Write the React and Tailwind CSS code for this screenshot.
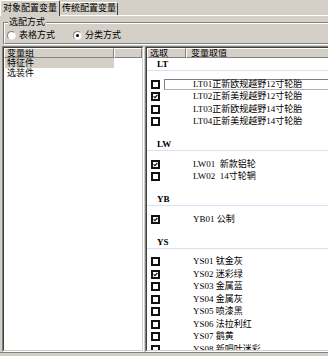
import React from 'react';

// Option groups shown on the right-hand list
const GROUPS = [
  {
    code: 'LT',
    items: [
      { text: 'LT01正新欧规越野12寸轮胎', checked: false, focus: true },
      { text: 'LT02正新美规越野12寸轮胎', checked: true },
      { text: 'LT03正新欧规越野14寸轮胎', checked: false },
      { text: 'LT04正新美规越野14寸轮胎', checked: false },
    ],
  },
  {
    code: 'LW',
    items: [
      { text: 'LW01  新款铝轮', checked: true },
      { text: 'LW02  14寸轮辋', checked: false },
    ],
  },
  {
    code: 'YB',
    items: [{ text: 'YB01 公制', checked: true }],
  },
  {
    code: 'YS',
    items: [
      { text: 'YS01 钛金灰', checked: false },
      { text: 'YS02 迷彩绿', checked: true },
      { text: 'YS03 金属蓝', checked: false },
      { text: 'YS04 金属灰', checked: false },
      { text: 'YS05 喷漆黑', checked: false },
      { text: 'YS06 法拉利红', checked: false },
      { text: 'YS07 鹅黄', checked: false },
      { text: 'YS08 新吧叶迷彩', checked: false },
    ],
  },
];

function CheckBox({ checked }) {
  return (
    <svg width="9" height="9" viewBox="0 0 9 9" className="shrink-0">
      <rect x="1" y="1" width="7" height="7" fill="white" stroke="#111" strokeWidth="2" />
      {checked && <path d="M2.6 4.4 L3.9 5.7 L6.4 3" stroke="#111" strokeWidth="1.2" fill="none" />}
    </svg>
  );
}

function Radio({ on }) {
  return (
    <div className="w-[9px] h-[9px] shrink-0 rounded-full bg-white border border-[#808080] border-b-[#e8e8e8] border-r-[#e8e8e8] flex items-center justify-center">
      {on && <div className="w-[3px] h-[3px] rounded-full bg-black" />}
    </div>
  );
}

// Sunken 2px frame, classic style
function Sunken({ className, children }) {
  return (
    <div className={`border-t border-l border-[#808080] border-b border-r border-b-white border-r-white ${className}`}>
      <div className="h-full border-t border-l border-[#404040] border-b border-r border-b-[#d4d0c8] border-r-[#d4d0c8] bg-white overflow-hidden">
        {children}
      </div>
    </div>
  );
}

const headCell = 'h-[10px] bg-[#d4d0c8] border-t border-l border-white border-b border-r border-b-[#808080] border-r-[#808080] leading-[8px] overflow-hidden whitespace-nowrap';

export default function App() {
  return (
    <div
      className="w-[328px] h-[356px] overflow-hidden bg-[#d4d0c8] text-[9px] text-black flex flex-col"
      style={{ fontFamily: '"Liberation Serif", "Noto Sans CJK SC", serif' }}
    >
      {/* Tabs */}
      <div className="h-[16px] shrink-0 flex items-end border-b border-white">
        <div className="h-[16px] -mb-px w-[60px] bg-[#d4d0c8] border-t border-l border-white border-r border-r-[#404040] rounded-t-[2px] pl-[2px] pt-[1px] leading-[12px] whitespace-nowrap">
          对象配置变量
        </div>
        <div className="h-[13px] w-[58px] border-t border-white border-r border-r-[#404040] rounded-t-[2px] pl-[2px] leading-[11px] whitespace-nowrap">
          传统配置变量
        </div>
      </div>

      {/* Group box */}
      <div className="relative mt-[6px] ml-[3px] w-[340px] h-[23px] shrink-0 border-t border-l border-[#808080] border-b border-r border-b-white border-r-white">
        <div className="h-full border-t border-l border-white border-b border-r border-b-[#808080] border-r-[#808080] flex items-start pt-[7px] pl-[2px]">
          <Radio on={false} />
          <span className="ml-[3px] leading-[9px]">表格方式</span>
          <div className="ml-[18px]">
            <Radio on={true} />
          </div>
          <span className="ml-[3px] leading-[9px]">分类方式</span>
        </div>
        <div className="absolute -top-[7px] left-[4px] bg-[#d4d0c8] px-[1px] leading-[12px]">选配方式</div>
      </div>

      {/* Lists */}
      <div className="mt-[1px] h-[306px] shrink-0 flex">
        <Sunken className="ml-[2px] w-[142px] h-full shrink-0">
          <div className="flex">
            <div className={`${headCell} w-[110px] pl-[2px]`}>变量组</div>
            <div className={`${headCell} w-[28px]`} />
          </div>
          <div className="h-[10px] w-[109px] ml-px bg-[#d4d0c8] pl-[2px] leading-[10px]">特征件</div>
          <div className="h-[10px] pl-[3px] leading-[10px]">选装件</div>
        </Sunken>

        <Sunken className="ml-px w-[200px] h-full shrink-0">
          <div className="flex">
            <div className={`${headCell} w-[39px] pl-[2px]`}>选取</div>
            <div className={`${headCell} flex-1 pl-[4px]`}>变量取值</div>
          </div>
          {GROUPS.map((g, gi) => (
            <div key={g.code} className={gi === 0 ? '' : 'pt-[10px]'}>
              <div className="h-[12px] pl-[10px] font-bold leading-[12px]">{g.code}</div>
              <div className="h-px bg-[#d3e2f4]" />
              <div className="pt-[7px]">
                {g.items.map((it) => (
                  <div key={it.text} className="h-[12.5px] flex items-center">
                    <div className="ml-[4px]">
                      <CheckBox checked={it.checked} />
                    </div>
                    {it.focus ? (
                      <div className="ml-[4px] flex-1 h-[11px] border border-[#b0b0b0] border-t-[#808080] border-l-[#808080] pl-[28px] leading-[9px] whitespace-pre">
                        {it.text}
                      </div>
                    ) : (
                      <div className="ml-[4px] flex-1 pl-[29px] leading-[11px] whitespace-pre">{it.text}</div>
                    )}
                  </div>
                ))}
              </div>
            </div>
          ))}
        </Sunken>
      </div>

      <div className="h-px bg-[#808080] shrink-0" />
    </div>
  );
}
